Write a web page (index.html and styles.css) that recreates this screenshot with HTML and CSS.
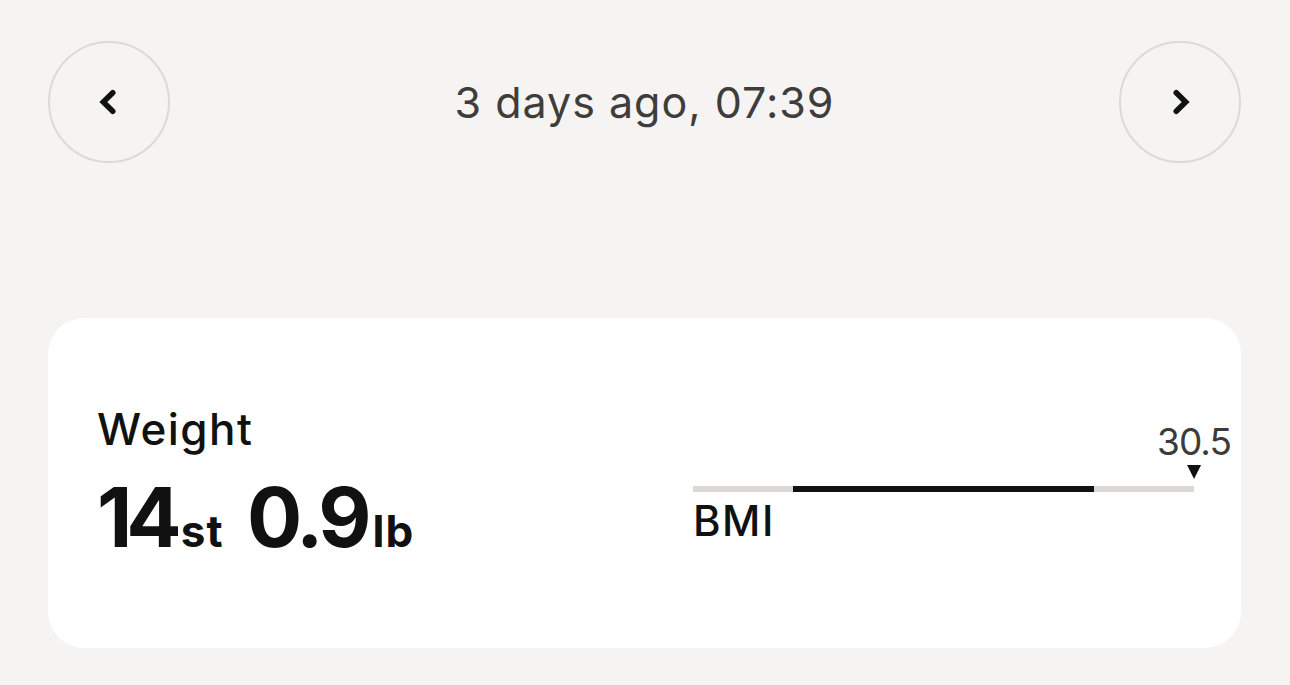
FILE: index.html
```html
<!DOCTYPE html>
<html lang="en">
<head>
<meta charset="utf-8">
<title>Weight</title>
<link rel="stylesheet" href="styles.css">
</head>
<body>
<main class="page">
  <header class="nav">
    <button class="nav-btn" aria-label="Previous">
      <svg class="chevron" viewBox="0 0 24 24" width="36" height="36"><path d="M14.5 5.8 L8.2 12 L14.5 18.2" fill="none" stroke="#111" stroke-width="3.7" stroke-linecap="round" stroke-linejoin="miter"/></svg>
    </button>
    <div class="nav-title">3 days ago, 07:39</div>
    <button class="nav-btn" aria-label="Next">
      <svg class="chevron" viewBox="0 0 24 24" width="36" height="36"><path d="M9.5 5.8 L15.8 12 L9.5 18.2" fill="none" stroke="#111" stroke-width="3.7" stroke-linecap="round" stroke-linejoin="miter"/></svg>
    </button>
  </header>

  <section class="card">
    <div class="weight">
      <div class="weight-label">Weight</div>
      <div class="weight-value"><span class="num num-tight">14</span><span class="unit">st</span> <span class="num num-gap">0.9</span><span class="unit">lb</span></div>
    </div>
    <div class="bmi">
      <div class="scale">
        <div class="marker" style="left:100%">
          <span class="marker-value">30.5</span>
          <span class="marker-arrow"></span>
        </div>
        <div class="track"><div class="range" style="left:20%;width:60%"></div></div>
      </div>
      <div class="bmi-label">BMI</div>
    </div>
  </section>
</main>
</body>
</html>
```

FILE: styles.css
```css
html, body {
  margin: 0;
  padding: 0;
  background: #f5f4f2;
}

body {
  font-family: Inter, "Noto Sans", "Liberation Sans", sans-serif;
  color: #111;
}

.page {
  padding: 41px 49px 0 48px;
  height: 685px;
  box-sizing: border-box;
}

.nav {
  display: flex;
  align-items: center;
  justify-content: space-between;
  height: 122px;
}

.nav-btn {
  width: 122px;
  height: 122px;
  box-sizing: border-box;
  border: 2px solid #dddad6;
  border-radius: 50%;
  background: transparent;
  display: flex;
  align-items: center;
  justify-content: center;
  padding: 0;
}

.chevron {
  display: block;
}

.nav-title {
  font-size: 43px;
  color: #3f3d3b;
  letter-spacing: 1px;
}

.card {
  margin-top: 155px;
  background: #fff;
  border-radius: 36px;
  height: 330px;
  box-sizing: border-box;
  padding: 84px 47px 0 49px;
  display: flex;
  justify-content: space-between;
  align-items: flex-start;
}

.weight-label {
  font-size: 44px;
  font-weight: 500;
  letter-spacing: 1.5px;
  color: #111;
}

.weight-value {
  margin-top: 21px;
  font-size: 82px;
  line-height: 82px;
  color: #111;
  font-weight: 700;
  white-space: nowrap;
}

.weight-value .num {
  letter-spacing: -4px;
}

.weight-value .num-tight {
  letter-spacing: -6px;
}

.weight-value .num-gap {
  margin-left: 4px;
}

.weight-value .unit {
  font-size: 44px;
  letter-spacing: 1px;
  margin-left: 5px;
}

.bmi {
  width: 501px;
  margin-top: 84px;
}

.scale {
  position: relative;
}

.track {
  position: relative;
  height: 6px;
  background: #dcd9d4;
}

.range {
  position: absolute;
  top: 0;
  bottom: 0;
  background: #111;
}

.marker {
  position: absolute;
  bottom: 100%;
  margin-bottom: 7px;
  transform: translateX(-50%);
  display: flex;
  flex-direction: column;
  align-items: center;
}

.marker-value {
  font-size: 37px;
  color: #3d3b39;
  letter-spacing: -1px;
  line-height: 40px;
}

.marker-arrow {
  width: 0;
  height: 0;
  border-left: 7px solid transparent;
  border-right: 7px solid transparent;
  border-top: 14px solid #111;
  margin-top: 3px;
}

.bmi-label {
  margin-top: 3px;
  font-size: 42px;
  font-weight: 500;
  letter-spacing: 1.5px;
  color: #111;
}
```
